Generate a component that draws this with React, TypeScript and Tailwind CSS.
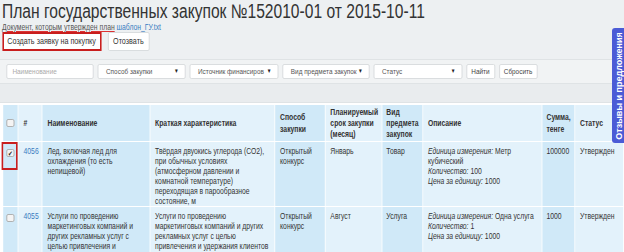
import React from "react";

const dark = "bg-[#d0e9f8]";
const light = "bg-[#e3f2fb]";

function Check({ checked }: { checked?: boolean }) {
  return (
    <div className="w-[10px] h-[8px] rounded-[2px] border border-[#a9a9a9] bg-[#f4f4f4] flex items-center justify-center text-[7px] leading-[7px] text-[#222]">
      {checked ? "✔" : ""}
    </div>
  );
}

function Select({ label, w }: { label: string; w: string }) {
  return (
    <div className={`${w} h-[15px] bg-white border border-[#d6d9db] rounded-[2px] flex items-center justify-between pl-[10px] pr-[7px] text-[8px] text-[#555]`}>
      <span className="whitespace-nowrap">{label}</span>
      <span className="text-[6px] text-[#222]">▼</span>
    </div>
  );
}

export default function App() {
  return (
    <div className="w-[624px] h-[252px] overflow-hidden bg-[#edf0f2] relative font-['Liberation_Sans',Arial,sans-serif] text-[#333]">
      <div className="w-[780px] origin-top-left scale-x-80">
        <div className="pl-[2.5px]">
          <h1 className="text-[19.5px] leading-[22px] text-[#333]">План государственных закупок №152010-01 от 2015-10-11</h1>
          <div className="text-[8.5px] leading-[9px] mt-[1px] text-[#555]">
            <span className="underline decoration-[#d33] decoration-1 underline-offset-[1px]">Документ, которым утвержден план</span>{" "}
            <span className="text-[#3a7cc1]">шаблон_ГУ.txt</span>
          </div>
          <div className="flex gap-[8px] mt-[0px]">
            <div className="h-[19px] w-[124px] border-2 border-[#c81e1e] bg-white flex items-center justify-center text-[9px] text-[#333] whitespace-nowrap">
              Создать заявку на покупку
            </div>
            <div className="h-[19px] w-[52px] border border-[#d6d9db] rounded-[2px] bg-white flex items-center justify-center text-[9px] text-[#333]">
              Отозвать
            </div>
          </div>
        </div>

        <div className="mt-[8px] h-[25px] border-y border-[#dfe3e5] bg-[#f1f3f4] flex items-center gap-[5px] pl-[7.5px]">
          <div className="w-[109px] h-[15px] bg-white border border-[#d6d9db] rounded-[2px] flex items-center pl-[7px] text-[8px] text-[#aaa]">
            Наименование
          </div>
          <Select label="Способ закупки" w="w-[110px]" />
          <Select label="Источник финансиров" w="w-[111px]" />
          <Select label="Вид предмета закупок" w="w-[109px]" />
          <Select label="Статус" w="w-[111px]" />
          <div className="w-[36px] h-[15px] bg-white border border-[#d6d9db] rounded-[2px] flex items-center justify-center text-[8px] text-[#444]">
            Найти
          </div>
          <div className="w-[48px] h-[15px] bg-white border border-[#d6d9db] rounded-[2px] flex items-center justify-center text-[8px] text-[#444]">
            Сбросить
          </div>
        </div>

        <div className="h-[19px] bg-[#e9ecee] border-b border-[#dfe3e5]"></div>

        <div className="bg-white pl-[2.5px] pt-[1px] h-[160px]">
          <table className="table-fixed border-separate border-spacing-[1.25px] text-[8.5px] leading-[10px] text-[#333]">
            <colgroup>
              <col className="w-[19px]" />
              <col className="w-[29px]" />
              <col className="w-[134px]" />
              <col className="w-[156px]" />
              <col className="w-[62px]" />
              <col className="w-[70px]" />
              <col className="w-[50px]" />
              <col className="w-[149px]" />
              <col className="w-[40px]" />
              <col className="w-[60px]" />
            </colgroup>
            <thead>
              <tr className="h-[36px] text-left align-middle">
                <th className={`${dark} px-0`}><div className="flex justify-center"><Check /></div></th>
                <th className={`${light} pl-[6px] font-bold`}>#</th>
                <th className={`${dark} pl-[6px] font-bold`}>Наименование</th>
                <th className={`${light} pl-[6px] font-bold`}>Краткая характеристика</th>
                <th className={`${dark} pl-[6px] font-bold leading-[12px]`}>Способ закупки</th>
                <th className={`${light} pl-[6px] pr-[2px] font-bold leading-[11px]`}>Планируемый срок закупки (месяц)</th>
                <th className={`${dark} pl-[5px] font-bold leading-[11px]`}>Вид предмета закупок</th>
                <th className={`${light} pl-[6px] font-bold`}>Описание</th>
                <th className={`${dark} pl-[5px] font-bold leading-[12px]`}>Сумма, тенге</th>
                <th className={`${light} pl-[6px] font-bold`}>Статус</th>
              </tr>
            </thead>
            <tbody className="align-top">
              <tr className="h-[64px]">
                <td className={`${dark} relative pt-[5px]`}>
                  <div className="flex justify-center pt-[2px]"><Check checked /></div>
                  <div className="absolute left-[-1.5px] top-0 w-[20px] h-[28px] border-2 border-[#c81e1e]"></div>
                </td>
                <td className={`${light} pl-[6px] pt-[4px] text-[#3a7cc1]`}>4056</td>
                <td className={`${dark} pl-[6px] pt-[4px] pr-[4px]`}>Лед, включая лед для охлаждения (то есть непищевой)</td>
                <td className={`${light} pl-[6px] pt-[4px] pr-[3px]`}>Твёрдая двуокись углерода (СО2), при обычных условиях (атмосферном давлении и комнатной температуре) переходящая в парообразное состояние, м</td>
                <td className={`${dark} pl-[6px] pt-[4px]`}>Открытый конкурс</td>
                <td className={`${light} pl-[6px] pt-[4px]`}>Январь</td>
                <td className={`${dark} pl-[5px] pt-[4px]`}>Товар</td>
                <td className={`${light} pl-[6px] pt-[4px] pr-[4px]`}>
                  <i>Единица измерения:</i> Метр кубический<br />
                  <i>Количество:</i> 100<br />
                  <i>Цена за единицу:</i> 1000
                </td>
                <td className={`${dark} pl-[5px] pt-[4px]`}>100000</td>
                <td className={`${light} pl-[6px] pt-[4px]`}>Утвержден</td>
              </tr>
              <tr className="h-[50px]">
                <td className={`${dark} pt-[5px]`}><div className="flex justify-center pt-[2px]"><Check /></div></td>
                <td className={`${light} pl-[6px] pt-[4px] text-[#3a7cc1]`}>4055</td>
                <td className={`${dark} pl-[6px] pt-[4px] pr-[4px]`}>Услуги по проведению маркетинговых компаний и других рекламных услуг с целью привлечения и</td>
                <td className={`${light} pl-[6px] pt-[4px] pr-[3px]`}>Услуги по проведению маркетинговых компаний и других рекламных услуг с целью привлечения и удержания клиентов</td>
                <td className={`${dark} pl-[6px] pt-[4px]`}>Открытый конкурс</td>
                <td className={`${light} pl-[6px] pt-[4px]`}>Август</td>
                <td className={`${dark} pl-[5px] pt-[4px]`}>Услуга</td>
                <td className={`${light} pl-[6px] pt-[4px] pr-[4px]`}>
                  <i>Единица измерения:</i> Одна услуга<br />
                  <i>Количество:</i> 1<br />
                  <i>Цена за единицу:</i> 1000
                </td>
                <td className={`${dark} pl-[5px] pt-[4px]`}>1000</td>
                <td className={`${light} pl-[6px] pt-[4px]`}>Утвержден</td>
              </tr>
            </tbody>
          </table>
        </div>
      </div>

      <div className="absolute left-[612px] top-[28px] w-[14px] h-[115px] bg-[#4b5bd6] rounded-l-[3px] flex items-center justify-center overflow-hidden">
        <span className="-rotate-90 whitespace-nowrap text-white text-[9px] leading-[10px] font-bold">Отзывы и предложения</span>
      </div>
    </div>
  );
}
